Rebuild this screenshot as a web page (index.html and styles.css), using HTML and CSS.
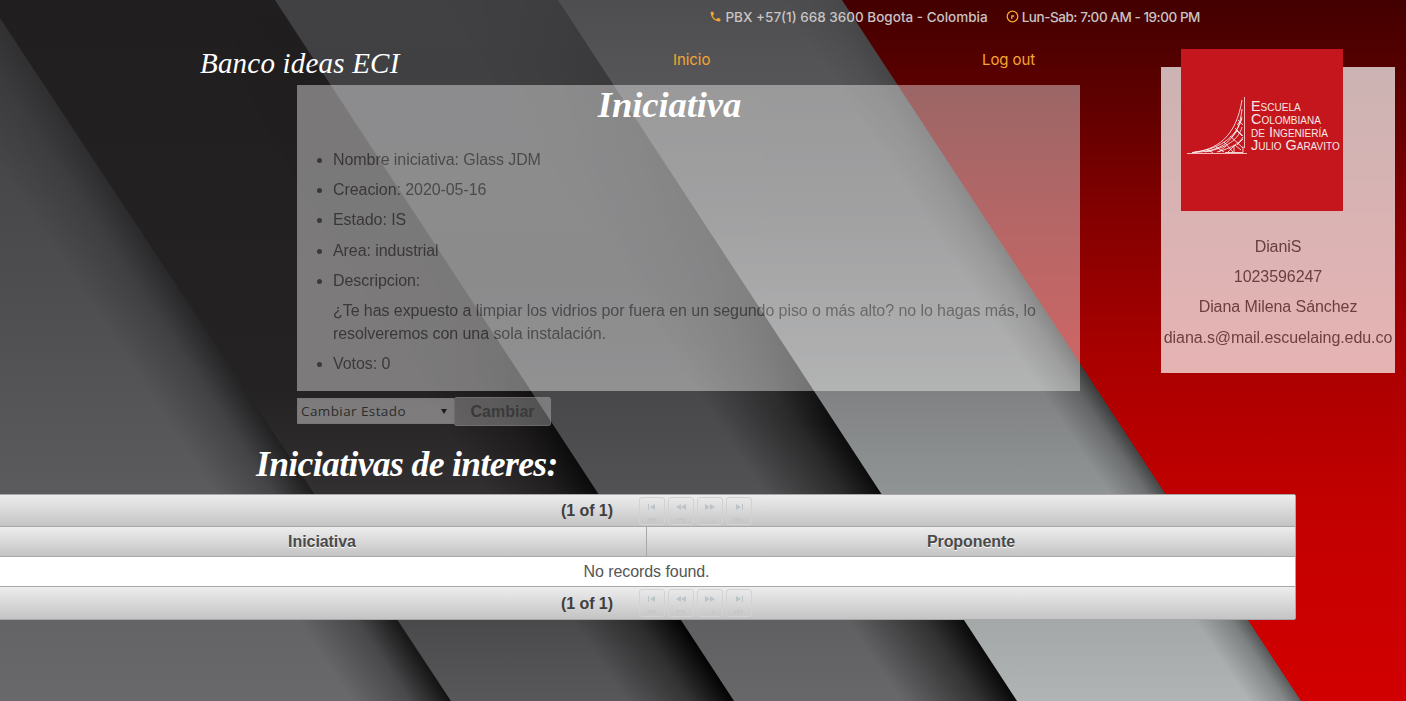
FILE: index.html
```html
<!DOCTYPE html>
<html lang="es">
<head>
<meta charset="utf-8">
<title>Banco ideas ECI</title>
<link rel="stylesheet" href="styles.css">
</head>
<body>
<svg class="backdrop" width="1406" height="701" viewBox="0 0 1406 701" aria-hidden="true">
  <defs>
    <linearGradient id="b0" gradientUnits="userSpaceOnUse" x1="0" y1="0" x2="0" y2="701">
      <stop offset="0" stop-color="#3e3e40"/><stop offset=".4" stop-color="#4d4d50"/><stop offset="1" stop-color="#69696c"/>
    </linearGradient>
    <linearGradient id="b1" gradientUnits="userSpaceOnUse" x1="0" y1="0" x2="0" y2="701">
      <stop offset="0" stop-color="#211e1f"/><stop offset=".55" stop-color="#252223"/><stop offset=".68" stop-color="#302d2e"/><stop offset="1" stop-color="#58585a"/>
    </linearGradient>
    <linearGradient id="b2" gradientUnits="userSpaceOnUse" x1="0" y1="0" x2="0" y2="701">
      <stop offset="0" stop-color="#414143"/><stop offset=".4" stop-color="#3e3e40"/><stop offset=".62" stop-color="#4c4c4e"/><stop offset="1" stop-color="#68686a"/>
    </linearGradient>
    <linearGradient id="b3" gradientUnits="userSpaceOnUse" x1="0" y1="0" x2="0" y2="701">
      <stop offset="0" stop-color="#4e4e50"/><stop offset=".3" stop-color="#626264"/><stop offset=".53" stop-color="#7c7d7e"/><stop offset=".65" stop-color="#8b8e8f"/><stop offset="1" stop-color="#b0b4b5"/>
    </linearGradient>
    <linearGradient id="b4" gradientUnits="userSpaceOnUse" x1="0" y1="0" x2="0" y2="701">
      <stop offset="0" stop-color="#430000"/><stop offset=".14" stop-color="#5e0000"/><stop offset=".29" stop-color="#800000"/><stop offset=".5" stop-color="#a80000"/><stop offset=".72" stop-color="#c20000"/><stop offset="1" stop-color="#d20000"/>
    </linearGradient>
    <linearGradient id="sa" gradientUnits="userSpaceOnUse" x1="-12" y1="0" x2="-79" y2="44">
      <stop offset="0" stop-color="#000" stop-opacity=".8"/><stop offset=".4" stop-color="#000" stop-opacity=".3"/><stop offset="1" stop-color="#000" stop-opacity="0"/>
    </linearGradient>
    <linearGradient id="sb" gradientUnits="userSpaceOnUse" x1="275" y1="0" x2="200" y2="49">
      <stop offset="0" stop-color="#000" stop-opacity=".95"/><stop offset=".4" stop-color="#000" stop-opacity=".4"/><stop offset="1" stop-color="#000" stop-opacity="0"/>
    </linearGradient>
    <linearGradient id="sc" gradientUnits="userSpaceOnUse" x1="558" y1="0" x2="476" y2="54">
      <stop offset="0" stop-color="#000" stop-opacity=".95"/><stop offset=".35" stop-color="#000" stop-opacity=".5"/><stop offset="1" stop-color="#000" stop-opacity="0"/>
    </linearGradient>
    <linearGradient id="sd" gradientUnits="userSpaceOnUse" x1="842" y1="0" x2="800" y2="28">
      <stop offset="0" stop-color="#000" stop-opacity=".75"/><stop offset=".4" stop-color="#000" stop-opacity=".3"/><stop offset="1" stop-color="#000" stop-opacity="0"/>
    </linearGradient>
    <linearGradient id="fa" gradientUnits="userSpaceOnUse" x1="0" y1="0" x2="0" y2="701">
      <stop offset="0" stop-color="#fff" stop-opacity=".25"/><stop offset=".6" stop-color="#fff" stop-opacity=".75"/><stop offset="1" stop-color="#fff"/>
    </linearGradient>
    <linearGradient id="fb" gradientUnits="userSpaceOnUse" x1="0" y1="0" x2="0" y2="701">
      <stop offset="0" stop-color="#fff" stop-opacity="0"/><stop offset=".43" stop-color="#fff" stop-opacity=".05"/><stop offset=".62" stop-color="#fff" stop-opacity=".7"/><stop offset=".85" stop-color="#fff"/>
    </linearGradient>
    <linearGradient id="fc" gradientUnits="userSpaceOnUse" x1="0" y1="0" x2="0" y2="701">
      <stop offset="0" stop-color="#fff" stop-opacity=".05"/><stop offset=".4" stop-color="#fff" stop-opacity=".25"/><stop offset=".6" stop-color="#fff" stop-opacity=".9"/><stop offset="1" stop-color="#fff"/>
    </linearGradient>
    <linearGradient id="fd" gradientUnits="userSpaceOnUse" x1="0" y1="0" x2="0" y2="701">
      <stop offset="0" stop-color="#fff" stop-opacity=".1"/><stop offset=".5" stop-color="#fff" stop-opacity=".8"/><stop offset="1" stop-color="#fff" stop-opacity=".8"/>
    </linearGradient>
    <mask id="ma" maskUnits="userSpaceOnUse" x="0" y="0" width="1406" height="701"><rect width="1406" height="701" fill="url(#fa)"/></mask>
    <mask id="mb" maskUnits="userSpaceOnUse" x="0" y="0" width="1406" height="701"><rect width="1406" height="701" fill="url(#fb)"/></mask>
    <mask id="mc" maskUnits="userSpaceOnUse" x="0" y="0" width="1406" height="701"><rect width="1406" height="701" fill="url(#fc)"/></mask>
    <mask id="md" maskUnits="userSpaceOnUse" x="0" y="0" width="1406" height="701"><rect width="1406" height="701" fill="url(#fd)"/></mask>
  </defs>
  <rect width="1406" height="701" fill="url(#b0)"/>
  <rect width="1406" height="701" fill="url(#sa)" mask="url(#ma)"/>
  <polygon points="-12,0 1406,0 1406,701 451,701" fill="url(#b1)"/>
  <rect width="1406" height="701" fill="url(#sb)" mask="url(#mb)"/>
  <polygon points="275,0 1406,0 1406,701 734,701" fill="url(#b2)"/>
  <rect width="1406" height="701" fill="url(#sc)" mask="url(#mc)"/>
  <polygon points="558,0 1406,0 1406,701 1017,701" fill="url(#b3)"/>
  <rect width="1406" height="701" fill="url(#sd)" mask="url(#md)"/>
  <polygon points="842,0 1406,0 1406,701 1301,701" fill="url(#b4)"/>
</svg>

<div class="page">
  <div class="topbar">
    <span class="contact contact-phone">
      <svg class="contact-icon" width="13" height="13" viewBox="0 0 24 24"><path class="icon-fill" d="M6.62 10.79c1.44 2.83 3.76 5.14 6.59 6.59l2.2-2.2c.27-.27.67-.36 1.02-.24 1.12.37 2.33.57 3.57.57.55 0 1 .45 1 1V20c0 .55-.45 1-1 1-9.39 0-17-7.61-17-17 0-.55.45-1 1-1h3.5c.55 0 1 .45 1 1 0 1.25.2 2.45.57 3.57.11.35.03.74-.25 1.02l-2.2 2.2z"/></svg>
      PBX +57(1) 668 3600 Bogota - Colombia
    </span>
    <span class="contact contact-hours">
      <svg class="contact-icon" width="13" height="13" viewBox="0 0 13 13"><circle class="icon-line" cx="6.5" cy="6.5" r="5.3"/><path class="icon-line" d="M5.8 9V6h2.4"/></svg>
      Lun-Sab: 7:00 AM - 19:00 PM
    </span>
  </div>

  <div class="layout">
    <div class="main">
      <nav class="nav">
        <a class="brand">Banco ideas ECI</a>
        <a class="nav-link nav-first">Inicio</a>
        <a class="nav-link">Log out</a>
      </nav>

      <section class="stack">
        <div class="card">
          <ul class="facts">
            <li>Nombre iniciativa: Glass JDM</li>
            <li>Creacion: 2020-05-16</li>
            <li>Estado: IS</li>
            <li>Area: industrial</li>
            <li>Descripcion:
              <p class="desc">¿Te has expuesto a limpiar los vidrios por fuera en un segundo piso o más alto? no lo hagas más, lo resolveremos con una sola instalación.</p>
            </li>
            <li>Votos: 0</li>
          </ul>
        </div>
        <h1 class="card-title">Iniciativa</h1>
      </section>

      <form class="state-form">
        <span class="select-wrap">
          <select class="state-select"><option>Cambiar Estado</option></select>
        </span>
        <button class="state-button" type="button">Cambiar</button>
      </form>

      <h2 class="interest-title">Iniciativas de interes:</h2>
    </div>

    <aside class="profile">
      <div class="logo">
        <svg width="162" height="162" viewBox="0 0 162 162">
          <path class="logo-rule" d="M6 104.500H66M63.500 48V99"/>
          <g class="logo-lines">
            <path d="M11 103.500C36 101 55 88 61 51"/>
            <path d="M11 103.500C40 103 58 92 61 60"/>
            <path d="M14 103C42 100 58 84 61 68M24 103C46 99 58 90 61 78M36 103C50 99 58 95 62 88"/>
            <path d="M26 101l6 2.500M35 98l8 5M43 93l9 10M49 87l13 12M54 79l8 8M57 71l5 5"/>
            <path d="M38 103l7-6M47 103l7-7 6 5M56 96l6-6M51 88l5-6 5 5M56 76l5-6"/>
            <path d="M44 103.500h18v-6M53 103.500v-7"/>
          </g>
          <text class="logo-text" x="70" y="62">Escuela</text>
          <text class="logo-text" x="70" y="75">Colombiana</text>
          <text class="logo-text" x="70" y="88">de Ingeniería</text>
          <text class="logo-text" x="70" y="101">Julio Garavito</text>
        </svg>
      </div>
      <div class="profile-card">
        <p>DianiS</p>
        <p>1023596247</p>
        <p>Diana Milena Sánchez</p>
        <p>diana.s@mail.escuelaing.edu.co</p>
      </div>
    </aside>
  </div>

  <div class="datatable">
    <div class="pager">
      <span class="pager-count">(1 of 1)</span>
      <span class="pager-btn"><svg width="16" height="24" viewBox="0 0 16 24"><path class="g" d="M4 3h1v6H4zM11 3v6L6 6z"/><path class="o" d="M4 22v-3h7v3M7 19v3"/></svg></span>
      <span class="pager-btn"><svg width="16" height="24" viewBox="0 0 16 24"><path class="g" d="M8 3v6L3 6zM13 3v6L8 6z"/><path class="o" d="M4 22v-3h7v3"/></svg></span>
      <span class="pager-btn"><svg width="16" height="24" viewBox="0 0 16 24"><path class="g" d="M3 3v6l5-3zM8 3v6l5-3z"/><path class="o" d="M8 22h1M11 22v-3"/></svg></span>
      <span class="pager-btn"><svg width="16" height="24" viewBox="0 0 16 24"><path class="g" d="M11 3h1v6h-1zM5 3v6l5-3z"/><path class="o" d="M4 22v-3h7v3M7 19v3"/></svg></span>
    </div>
    <div class="thead">
      <div class="th">Iniciativa</div>
      <div class="th">Proponente</div>
    </div>
    <div class="empty">No records found.</div>
    <div class="pager pager-end">
      <span class="pager-count">(1 of 1)</span>
      <span class="pager-btn"><svg width="16" height="24" viewBox="0 0 16 24"><path class="g" d="M4 3h1v6H4zM11 3v6L6 6z"/><path class="o" d="M4 22v-3h7v3M7 19v3"/></svg></span>
      <span class="pager-btn"><svg width="16" height="24" viewBox="0 0 16 24"><path class="g" d="M8 3v6L3 6zM13 3v6L8 6z"/><path class="o" d="M4 22v-3h7v3"/></svg></span>
      <span class="pager-btn"><svg width="16" height="24" viewBox="0 0 16 24"><path class="g" d="M3 3v6l5-3zM8 3v6l5-3z"/><path class="o" d="M8 22h1M11 22v-3"/></svg></span>
      <span class="pager-btn"><svg width="16" height="24" viewBox="0 0 16 24"><path class="g" d="M11 3h1v6h-1zM5 3v6l5-3z"/><path class="o" d="M4 22v-3h7v3M7 19v3"/></svg></span>
    </div>
  </div>
</div>
</body>
</html>
```
FILE: styles.css
```css
* { box-sizing: border-box; }

html, body {
  margin: 0;
  height: 701px;
  overflow: hidden;
}

body {
  position: relative;
  background: #333;
  font-family: "Liberation Sans", Arial, sans-serif;
  font-size: 16px;
  letter-spacing: -.07px;
}

.backdrop {
  position: absolute;
  inset: 0;
  z-index: -1;
  display: block;
}

.page { width: 1406px; }

/* top contact bar */
.topbar {
  height: 35px;
  display: flex;
  justify-content: flex-end;
  align-items: center;
  gap: 18px;
  padding: 0 206px 2px 0;
  color: #c9c4c4;
  font-family: Inter, "Noto Sans", sans-serif;
  font-size: 13.500px;
  font-weight: 500;
}

.contact {
  display: flex;
  align-items: center;
  gap: 3px;
  white-space: nowrap;
}

.contact-phone { letter-spacing: 0; }
.contact-hours { letter-spacing: -.45px; }

.icon-fill { fill: #f5a631; }
.icon-line { fill: none; stroke: #f5a631; stroke-width: 1.300; }

/* two column area */
.layout { display: flex; height: 459px; }
.main { width: 1161px; flex: none; }

.nav {
  height: 50px;
  display: flex;
  align-items: center;
  padding-left: 200px;
}

.brand {
  width: 473px;
  flex: none;
  color: #fff;
  font-family: "Liberation Serif", serif;
  font-style: italic;
  font-size: 29px;
  letter-spacing: .2px;
  padding-top: 6px;
}

.nav-link {
  color: #f5a631;
  font-family: Inter, "Noto Sans", sans-serif;
  font-size: 15px;
  margin-top: -2px;
}

.nav-first { width: 309px; flex: none; }

/* initiative card */
.stack {
  display: grid;
  width: 783px;
  height: 306px;
  margin-left: 297px;
}

.stack > * { grid-area: 1 / 1; }

.card {
  background: #fff;
  color: #5c5c5c;
  opacity: .4;
  padding-top: 63px;
}

.card-title {
  margin: 0;
  align-self: start;
  padding-right: 38px;
  text-align: center;
  color: #fff;
  font-family: "Liberation Serif", serif;
  font-style: italic;
  font-weight: 700;
  font-size: 36.500px;
  line-height: 40px;
}

.facts {
  margin: 0;
  padding: 0 36px;
  line-height: 23px;
}

.facts li { margin-bottom: 7.200px; }
.desc { margin: 7.200px 0 0; }

/* state form */
.state-form {
  display: flex;
  align-items: flex-start;
  margin: 6px 0 0 297px;
}

.select-wrap {
  position: relative;
  display: block;
  width: 157px;
  height: 26px;
  margin-top: 1px;
}

.select-wrap::after {
  content: "";
  position: absolute;
  left: 144px;
  top: 11px;
  border-style: solid;
  border-width: 5px 3px 0;
  border-color: #1d1d1d transparent transparent;
}

.state-select {
  display: block;
  width: 157px;
  height: 26px;
  margin: 0;
  padding: 0 0 0 3px;
  appearance: none;
  background: rgba(255, 255, 255, .4);
  border: 1px solid #777;
  border-radius: 0;
  color: #2c2c2c;
  font-family: "Open Sans", sans-serif;
  font-size: 13.500px;
  letter-spacing: .4px;
}

.state-button {
  width: 97px;
  height: 29px;
  background: rgba(255, 255, 255, .28);
  border: 1px solid rgba(130, 130, 130, .5);
  border-radius: 3px;
  color: #3a3a3a;
  font-family: "Liberation Sans", Arial, sans-serif;
  font-weight: 700;
  font-size: 16px;
  padding: 0;
}

.interest-title {
  margin: 16px 0 0 256px;
  color: #fff;
  font-family: "Liberation Serif", serif;
  font-style: italic;
  font-weight: 700;
  font-size: 35.500px;
  letter-spacing: -.6px;
  line-height: 44px;
}

/* profile */
.profile {
  width: 234px;
  flex: none;
  padding-top: 14px;
}

.logo {
  width: 162px;
  height: 162px;
  margin-left: 20px;
  background: #c4161c;
  position: relative;
  z-index: 1;
}

.logo-rule { fill: none; stroke: #f2b9b9; stroke-width: 1; }
.logo-lines path { fill: none; stroke: #fff; stroke-width: .8; }

.logo-text {
  fill: #f7e6e6;
  font-family: "Liberation Sans", Arial, sans-serif;
  font-size: 14.400px;
  font-variant: small-caps;
  letter-spacing: 0;
}

.profile-card {
  width: 234px;
  height: 306px;
  margin-top: -144px;
  padding-top: 168px;
  background: #fff;
  color: #5a5a5a;
  opacity: .7;
  text-align: center;
  white-space: nowrap;
}

.profile-card p { margin: 0 0 7.200px; line-height: 23px; }

/* data table */
.datatable {
  width: 1299px;
  margin-left: -3px;
  border: 1px solid #a8a8a8;
  border-radius: 2px;
  color: #444;
}

.pager, .thead {
  background: linear-gradient(#ededed, #c4c4c4);
}

.pager {
  height: 32px;
  display: flex;
  align-items: center;
  justify-content: center;
  gap: 3px;
  border-bottom: 1px solid #a8a8a8;
  padding-left: 20px;
}

.pager-end { border-bottom: 0; }
.pager-end .pager-count { padding-top: 2px; }

.pager-count {
  font-weight: 700;
  margin-right: 23px;
  color: #3f3f3f;
}

.pager-btn {
  width: 26px;
  height: 28px;
  display: flex;
  align-items: center;
  justify-content: center;
  border: 1px solid #d2d2d2;
  border-radius: 3px;
}

.g { fill: #bcc4c8; transform: translateY(2px); }
.o { fill: none; stroke: #bcc4c8; stroke-width: 1; transform: translateY(1px); }

.thead {
  height: 30px;
  display: grid;
  grid-template-columns: 648px 1fr;
  border-bottom: 1px solid #a8a8a8;
}

.th {
  display: flex;
  align-items: center;
  justify-content: center;
  font-weight: 700;
  color: #4a4a4a;
  text-shadow: 0 1px 0 #fff;
}

.th + .th { border-left: 1px solid #a8a8a8; }

.empty {
  height: 30px;
  display: flex;
  align-items: center;
  justify-content: center;
  background: #fff;
  border-bottom: 1px solid #a8a8a8;
  color: #555;
}
```
